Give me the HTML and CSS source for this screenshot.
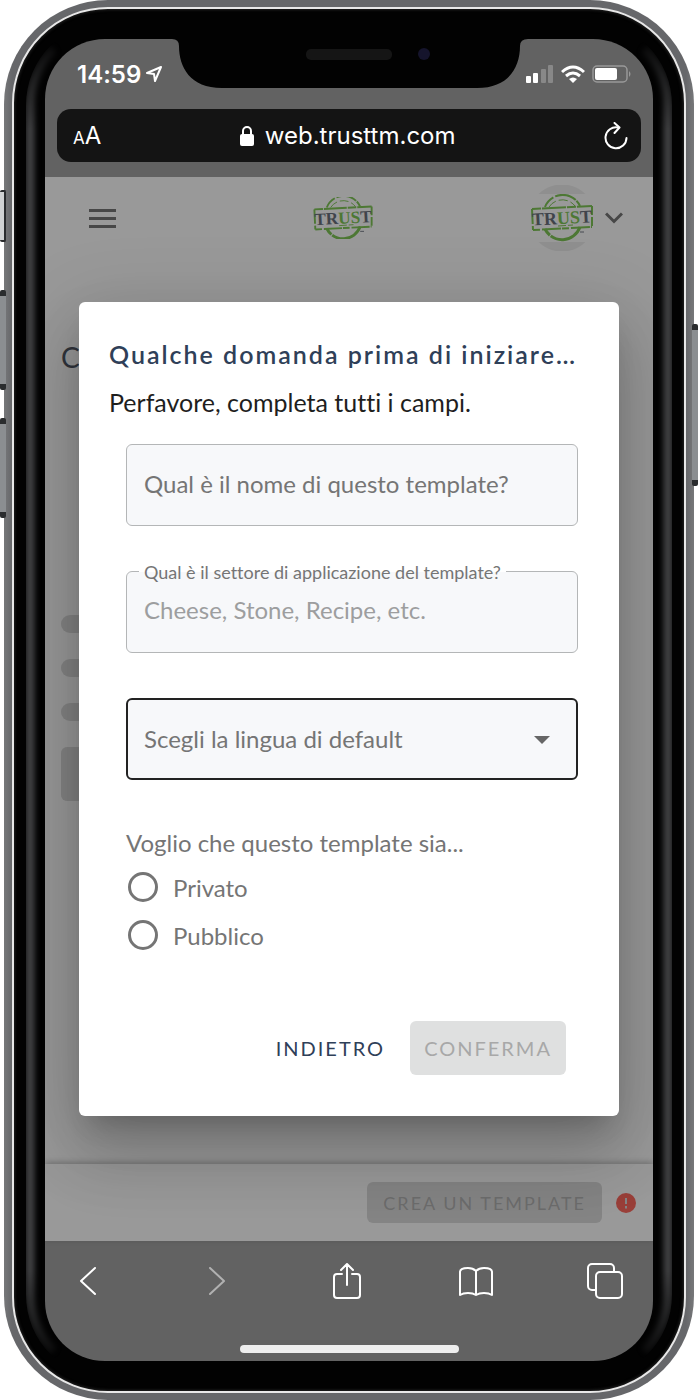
FILE: index.html
```html
<!DOCTYPE html>
<html lang="it">
<head>
    <meta charset="UTF-8">
    <meta name="viewport" content="width=device-width, initial-scale=1.0">
    <title>Trust</title>
    <link rel="stylesheet" href="styles.css">
</head>
<body>

<div class="phone">
    <span class="side-button mute"></span>
    <span class="side-button volume-up"></span>
    <span class="side-button volume-down"></span>
    <span class="side-button power"></span>

    <div class="bezel">
        <div class="screen">

            <svg class="notch" viewBox="0 0 356 50" aria-hidden="true">
                <path d="M0 0 Q7 0 7 7 C7 28 18 49 50 49 H305 C337 49 348 28 348 7 Q348 0 356 0 Z" fill="#020202"/>
                <rect x="134" y="10" width="86" height="11" rx="5" fill="#151515"/>
                <circle cx="252" cy="15" r="6" fill="#15142c"/>
            </svg>

            <div class="status-bar">
                <div class="clock">
                    <span>14:59</span>
                    <svg width="16" height="16" viewBox="0 0 16 16"><path d="M1 7 L15 1 L9 15 L8 8 Z" fill="none" stroke="#fff" stroke-width="2" stroke-linejoin="round"/></svg>
                </div>
                <div class="indicators">
                    <svg width="28" height="18" viewBox="0 0 28 18">
                        <rect x="0" y="11" width="5" height="7" rx="1" fill="#fff"/>
                        <rect x="7" y="8" width="5" height="10" rx="1" fill="#fff"/>
                        <rect x="15" y="4" width="5" height="14" rx="1" fill="#888"/>
                        <rect x="22" y="0" width="5" height="18" rx="1" fill="#888"/>
                    </svg>
                    <svg width="24" height="18" viewBox="0 0 24 18" fill="none" stroke="#fff" stroke-width="3">
                        <path d="M1 7 Q12 -3 23 7"/>
                        <path d="M5 11 Q12 5 19 11"/>
                        <path d="M8 14 Q12 11 16 14 L12 18 Z" fill="#fff" stroke="none"/>
                    </svg>
                    <svg width="39" height="18" viewBox="0 0 39 18">
                        <rect x="1" y="1" width="34" height="16" rx="4" fill="none" stroke="#999" stroke-width="1.5"/>
                        <rect x="3" y="3" width="22" height="12" rx="2" fill="#fff"/>
                        <path d="M37 6 q3 3 0 6z" fill="#999"/>
                    </svg>
                </div>
            </div>

            <div class="address-bar">
                <button class="text-size" aria-label="Dimensione testo"><small>A</small>A</button>
                <div class="address">
                    <svg width="14" height="20" viewBox="0 0 14 20"><path d="M3 9 V5 a4 4 0 0 1 8 0 V9" fill="none" stroke="#fff" stroke-width="2"/><rect x="0" y="8" width="14" height="12" rx="2" fill="#fff"/></svg>
                    <span>web.trusttm.com</span>
                </div>
                <button class="reload" aria-label="Ricarica">
                    <svg width="24" height="28" viewBox="0 0 24 28" fill="none" stroke="#fff" stroke-width="2" stroke-linecap="round" stroke-linejoin="round"><path d="M14 5.5 A10.500 10.500 0 1 0 22.500 16"/><path d="M10.500 1 L15.500 5.500 L10.500 11"/></svg>
                </button>
            </div>

            <div class="page">
                <header class="page-header">
                    <button class="menu" aria-label="Menu"><i></i><i></i><i></i></button>
                    <svg class="logo" viewBox="0 0 62 44">
                        <g id="trust-logo">
                            <g fill="none" stroke="#80c858">
                                <path d="M14 11 A19 19 0 0 1 49 10" stroke-width="2" stroke-dasharray="13 2 22 1"/>
                                <path d="M18 11 A16 16 0 0 1 44 10" stroke-width="1" stroke-dasharray="9 3"/>
                                <path d="M14 33 A19 19 0 0 0 49 31" stroke-width="3" stroke-dasharray="8 1 40 1"/>
                                <path d="M1 13 L61 10" stroke-width="2" stroke-dasharray="9 1 24 1"/>
                                <path d="M1 13 L2 34" stroke-width="2" stroke-dasharray="15 2"/>
                                <path d="M61 10 L61 31" stroke-width="2" stroke-dasharray="9 2"/>
                                <path d="M2 34 L61 31" stroke-width="2" stroke-dasharray="7 2 19 1"/>
                                <path d="M27 30 L42 29" stroke-width="1" stroke-dasharray="8 2"/>
                            </g>
                            <text x="31" y="28" text-anchor="middle" transform="rotate(-3 31 22)" class="logo-text">TR<tspan class="logo-green">US</tspan>T</text>
                            <path d="M49 36h4" stroke="#777d88" stroke-width="1"/>
                        </g>
                    </svg>
                    <button class="account" aria-label="Account">
                        <span class="avatar"><svg viewBox="0 0 62 44"><use href="#trust-logo"/></svg></span>
                        <svg width="18" height="12" viewBox="0 0 18 12" fill="none" stroke="#777" stroke-width="3"><path d="M1 1.500 L9 9.500 L17 1.500"/></svg>
                    </button>
                </header>

                <main class="page-content">
                    <h1>C</h1>
                    <div class="skeleton">
                        <span class="line"></span>
                        <span class="line"></span>
                        <span class="line"></span>
                        <span class="block"></span>
                    </div>
                </main>

                <footer class="page-footer">
                    <button class="create" disabled>CREA UN TEMPLATE</button>
                    <svg width="20" height="20" viewBox="0 0 20 20"><circle cx="10" cy="10" r="10" fill="#ff6a60"/><path d="M10 5v6M10 13v2.500" stroke="#ddd" stroke-width="2"/></svg>
                </footer>

                <div class="backdrop">
                    <form class="dialog" role="dialog" aria-labelledby="dialog-title">
                        <h2 id="dialog-title">Qualche domanda prima di iniziare…</h2>
                        <p>Perfavore, completa tutti i campi.</p>

                        <div class="fields">
                            <div class="field">
                                <input type="text" id="name">
                                <label for="name">Qual è il nome di questo template?</label>
                            </div>
                            <div class="field floating">
                                <input type="text" id="sector" placeholder="Cheese, Stone, Recipe, etc.">
                                <label for="sector">Qual è il settore di applicazione del template?</label>
                            </div>
                            <div class="field">
                                <select id="language" aria-label="Lingua di default">
                                    <option>Scegli la lingua di default</option>
                                </select>
                                <svg class="arrow" width="16" height="8" viewBox="0 0 16 8"><path d="M0 0h16l-8 8z" fill="#666"/></svg>
                            </div>

                            <fieldset>
                                <legend>Voglio che questo template sia...</legend>
                                <label><input type="radio" name="visibility"> Privato</label>
                                <label><input type="radio" name="visibility"> Pubblico</label>
                            </fieldset>
                        </div>

                        <div class="actions">
                            <button type="button" class="back">INDIETRO</button>
                            <button type="submit" class="confirm" disabled>CONFERMA</button>
                        </div>
                    </form>
                </div>
            </div>

            <nav class="toolbar">
                <button aria-label="Indietro"><svg width="36" height="36" viewBox="0 0 36 36"><path d="M24 5 L10 18 L24 31"/></svg></button>
                <button aria-label="Avanti" class="off"><svg width="36" height="36" viewBox="0 0 36 36"><path d="M10 5 L24 18 L10 31"/></svg></button>
                <button aria-label="Condividi"><svg width="36" height="36" viewBox="0 0 36 36"><path d="M13 11 H8 a3 3 0 0 0 -3 3 V32 a3 3 0 0 0 3 3 H28 a3 3 0 0 0 3 -3 V14 a3 3 0 0 0 -3 -3 H23 M18 22 V1 M12 7 L18 1 L24 7"/></svg></button>
                <button aria-label="Segnalibri"><svg width="36" height="36" viewBox="0 0 36 36"><path d="M18 8 Q15 5 10 5 Q2 5 2 9 V32 Q5 30 10 30 Q15 30 18 32 Q21 30 26 30 Q31 30 34 32 V9 Q34 5 26 5 Q21 5 18 8 Z M18 8 V32"/></svg></button>
                <button aria-label="Pannelli"><svg width="36" height="36" viewBox="0 0 36 36"><path d="M9 27 H5 a4 4 0 0 1 -4 -4 V5 a4 4 0 0 1 4 -4 H23 a4 4 0 0 1 4 4 V9"/><rect x="9" y="9" width="26" height="26" rx="4"/></svg></button>
            </nav>
            <div class="home-indicator"></div>
        </div>
    </div>
</div>

</body>
</html>
```
FILE: styles.css
```css
* {
    box-sizing: border-box;
}

body {
    margin: 0;
    background-color: #ffffff;
    font-family: Lato, "Open Sans", sans-serif;
    font-variant-ligatures: none;
}

button {
    padding: 0;
    border: none;
    background: none;
    font-family: inherit;
    cursor: pointer;
}

svg {
    display: block;
}

.logo-text {
    font-family: "Liberation Serif", serif;
    font-size: 18px;
    font-weight: bold;
    fill: #6c727d;
}

.logo-green {
    fill: #80c858;
}

/* Phone frame */
.phone {
    position: relative;
    display: flex;
    min-height: 100vh;
    margin: 0 4px;
    padding: 7px 8px;
    border-radius: 104px;
    background: linear-gradient(90deg, #77787a, #66676a 8px, #66676a calc(100% - 8px), #77787a);
}

.bezel {
    position: relative;
    display: flex;
    flex: 1;
    padding: 30px 31px;
    border: 2px solid #e8e8e8;
    border-radius: 96px;
    background-color: #020202;
    box-shadow: inset 0 0 3px 1px #222;
}

/* soft reflection along both sides */
.bezel::before {
    content: "";
    position: absolute;
    inset: 12px;
    border: 8px solid transparent;
    border-left-color: #4a4b4d;
    border-right-color: #4a4b4d;
    border-radius: 84px;
    filter: blur(3px);
    -webkit-mask-image: linear-gradient(transparent 10px, #000 110px, #000 calc(100% - 110px), transparent calc(100% - 10px));
    mask-image: linear-gradient(transparent 10px, #000 110px, #000 calc(100% - 110px), transparent calc(100% - 10px));
}

.side-button {
    position: absolute;
    left: -4px;
    width: 6px;
    border: solid #2a2c2e;
    border-width: 6px 0;
    border-radius: 2px;
    background-color: #8b8e91;
}

.mute {
    top: 190px;
    height: 52px;
    border-width: 2px 2px 2px 0;
    background-color: #d0d2d3;
}

.volume-up {
    top: 290px;
    height: 100px;
}

.volume-down {
    top: 418px;
    height: 100px;
}

.power {
    top: 324px;
    left: auto;
    right: -4px;
    height: 162px;
}

/* Screen */
.screen {
    position: relative;
    display: flex;
    flex: 1;
    flex-direction: column;
    min-width: 0;
    overflow: hidden;
    border-radius: 60px;
    background-color: #626262;
    color: #ffffff;
}

.notch {
    position: absolute;
    top: 0;
    left: 50%;
    width: 356px;
    height: 50px;
    margin-left: -177px;
}

.status-bar {
    display: flex;
    justify-content: space-between;
    align-items: center;
    height: 70px;
    padding: 0 22px 0 32px;
    font-family: Inter, sans-serif;
    font-size: 24px;
    font-weight: 600;
}

.clock,
.indicators {
    display: flex;
    align-items: center;
    gap: 7px;
}

.clock {
    gap: 5px;
}

.address-bar {
    display: flex;
    justify-content: space-between;
    align-items: center;
    height: 53px;
    margin: 0 12px 15px;
    padding: 0 13px 0 16px;
    border-radius: 14px;
    background-color: #141414;
    font-family: Inter, sans-serif;
    font-size: 24px;
}

.address {
    display: flex;
    align-items: center;
    gap: 11px;
    padding-right: 10px;
}

.text-size {
    color: #ffffff;
    font-size: 24px;
}

.text-size small {
    font-size: 17px;
}

/* Web page behind the dialog */
.page {
    position: relative;
    display: flex;
    flex: 1;
    flex-direction: column;
    background-color: #ffffff;
}

.page-header {
    display: flex;
    justify-content: space-between;
    align-items: center;
    height: 82px;
    padding: 0 30px 0 44px;
}

.menu {
    display: flex;
    flex-direction: column;
    gap: 5px;
    width: 27px;
}

.menu i {
    height: 3px;
    background-color: #777777;
}

.logo {
    width: 60px;
    height: 42px;
    margin-left: 38px;
}

.account {
    display: flex;
    align-items: center;
    gap: 12px;
}

.avatar {
    display: flex;
    align-items: center;
    height: 66px;
    background: radial-gradient(circle, #eeeeee 33px, transparent 34px);
}

.avatar svg {
    width: 62px;
    height: 48px;
    background-color: #ffffff;
}

.page-content {
    flex: 1;
    padding: 0 16px;
}

.page-content h1 {
    margin: 80px 0 0;
    color: #505764;
    font-size: 28px;
    font-weight: 400;
    line-height: 36px;
}

.skeleton {
    display: flex;
    flex-direction: column;
    gap: 26px;
    width: 50%;
    padding-top: 240px;
}

.skeleton .line {
    height: 18px;
    border-radius: 9px;
    background-color: #dcdcdc;
}

.skeleton .block {
    height: 54px;
    border-radius: 6px;
    background-color: #dcdcdc;
}

.page-footer {
    display: flex;
    justify-content: flex-end;
    align-items: center;
    gap: 14px;
    height: 77px;
    padding: 0 17px;
    box-shadow: 0 -2px 6px rgba(0, 0, 0, 0.25);
}

.create {
    height: 41px;
    padding: 0 16px;
    border-radius: 6px;
    background-color: #dddddd;
    color: #b4b4b4;
    font-size: 18px;
    letter-spacing: 2px;
}

/* Dialog */
.backdrop {
    position: absolute;
    inset: 0;
    display: flex;
    align-items: center;
    overflow: hidden;
    padding: 0 34px;
    background-color: rgba(0, 0, 0, 0.4);
}

.dialog {
    flex: 1;
    padding: 34px 30px 41px;
    border-radius: 6px;
    background-color: #ffffff;
    color: #1e1e1e;
    box-shadow: 0 18px 25px -12px rgba(0, 0, 0, 0.2), 0 40px 63px 5px rgba(0, 0, 0, 0.14), 0 15px 76px 13px rgba(0, 0, 0, 0.12);
}

.dialog h2 {
    margin: 0;
    color: #2f4058;
    font-size: 25px;
    font-weight: 600;
    letter-spacing: 2px;
    line-height: 36px;
    white-space: nowrap;
}

.dialog p {
    margin: 12px 0 24px;
    font-size: 25px;
    line-height: 36px;
}

.fields {
    display: flex;
    flex-direction: column;
    gap: 45px;
    margin: 0 11px 0 17px;
    color: #757575;
    font-size: 24px;
}

.field {
    position: relative;
}

.field input,
.field select {
    display: block;
    width: 100%;
    height: 82px;
    padding: 0 17px;
    border: 1px solid #b4b6b7;
    border-radius: 6px;
    background-color: #f7f8fa;
    color: #757575;
    font-family: inherit;
    font-size: 24px;
}

.field select {
    appearance: none;
    padding: 0 16px 2px;
    border: 2px solid #222222;
}

.field input::placeholder {
    color: #9d9e9f;
}

.field label {
    position: absolute;
    top: 22px;
    left: 18px;
    line-height: 36px;
}

.floating input {
    padding-bottom: 6px;
}

.field.floating label {
    top: -10px;
    left: 13px;
    padding: 0 5px;
    background: linear-gradient(#ffffff 50%, #f7f8fa 50%);
    font-size: 18px;
    line-height: 22px;
}

.arrow {
    position: absolute;
    top: 38px;
    right: 28px;
}

fieldset {
    display: flex;
    flex-direction: column;
    margin: 0;
    padding: 0;
    border: none;
}

fieldset legend {
    padding: 0 0 2px;
    line-height: 36px;
}

fieldset label {
    display: flex;
    align-items: center;
    gap: 15px;
    height: 48px;
    padding-left: 2px;
}

fieldset input {
    appearance: none;
    width: 30px;
    height: 30px;
    margin: 0;
    border: 3px solid #757575;
    border-radius: 50%;
}

.actions {
    display: flex;
    justify-content: flex-end;
    gap: 12px;
    margin: 62px 23px 0 0;
}

.actions button {
    height: 54px;
    padding: 0 13px;
    border-radius: 6px;
    font-size: 20px;
    letter-spacing: 2px;
}

.back {
    color: #2f4058;
}

.actions .confirm {
    padding: 0 14px;
    background-color: #dfe0e0;
    color: #a8a8a8;
}

/* Browser toolbar */
.toolbar {
    display: flex;
    justify-content: space-between;
    height: 80px;
    padding: 0 30px 0 26px;
}

.toolbar svg {
    fill: none;
    stroke: #ffffff;
    stroke-width: 2;
    stroke-linecap: round;
    stroke-linejoin: round;
}

.toolbar .off {
    opacity: 0.5;
}

.home-indicator {
    width: 219px;
    height: 8px;
    margin: 24px auto 8px;
    border-radius: 4px;
    background-color: #eeeeee;
}
```
